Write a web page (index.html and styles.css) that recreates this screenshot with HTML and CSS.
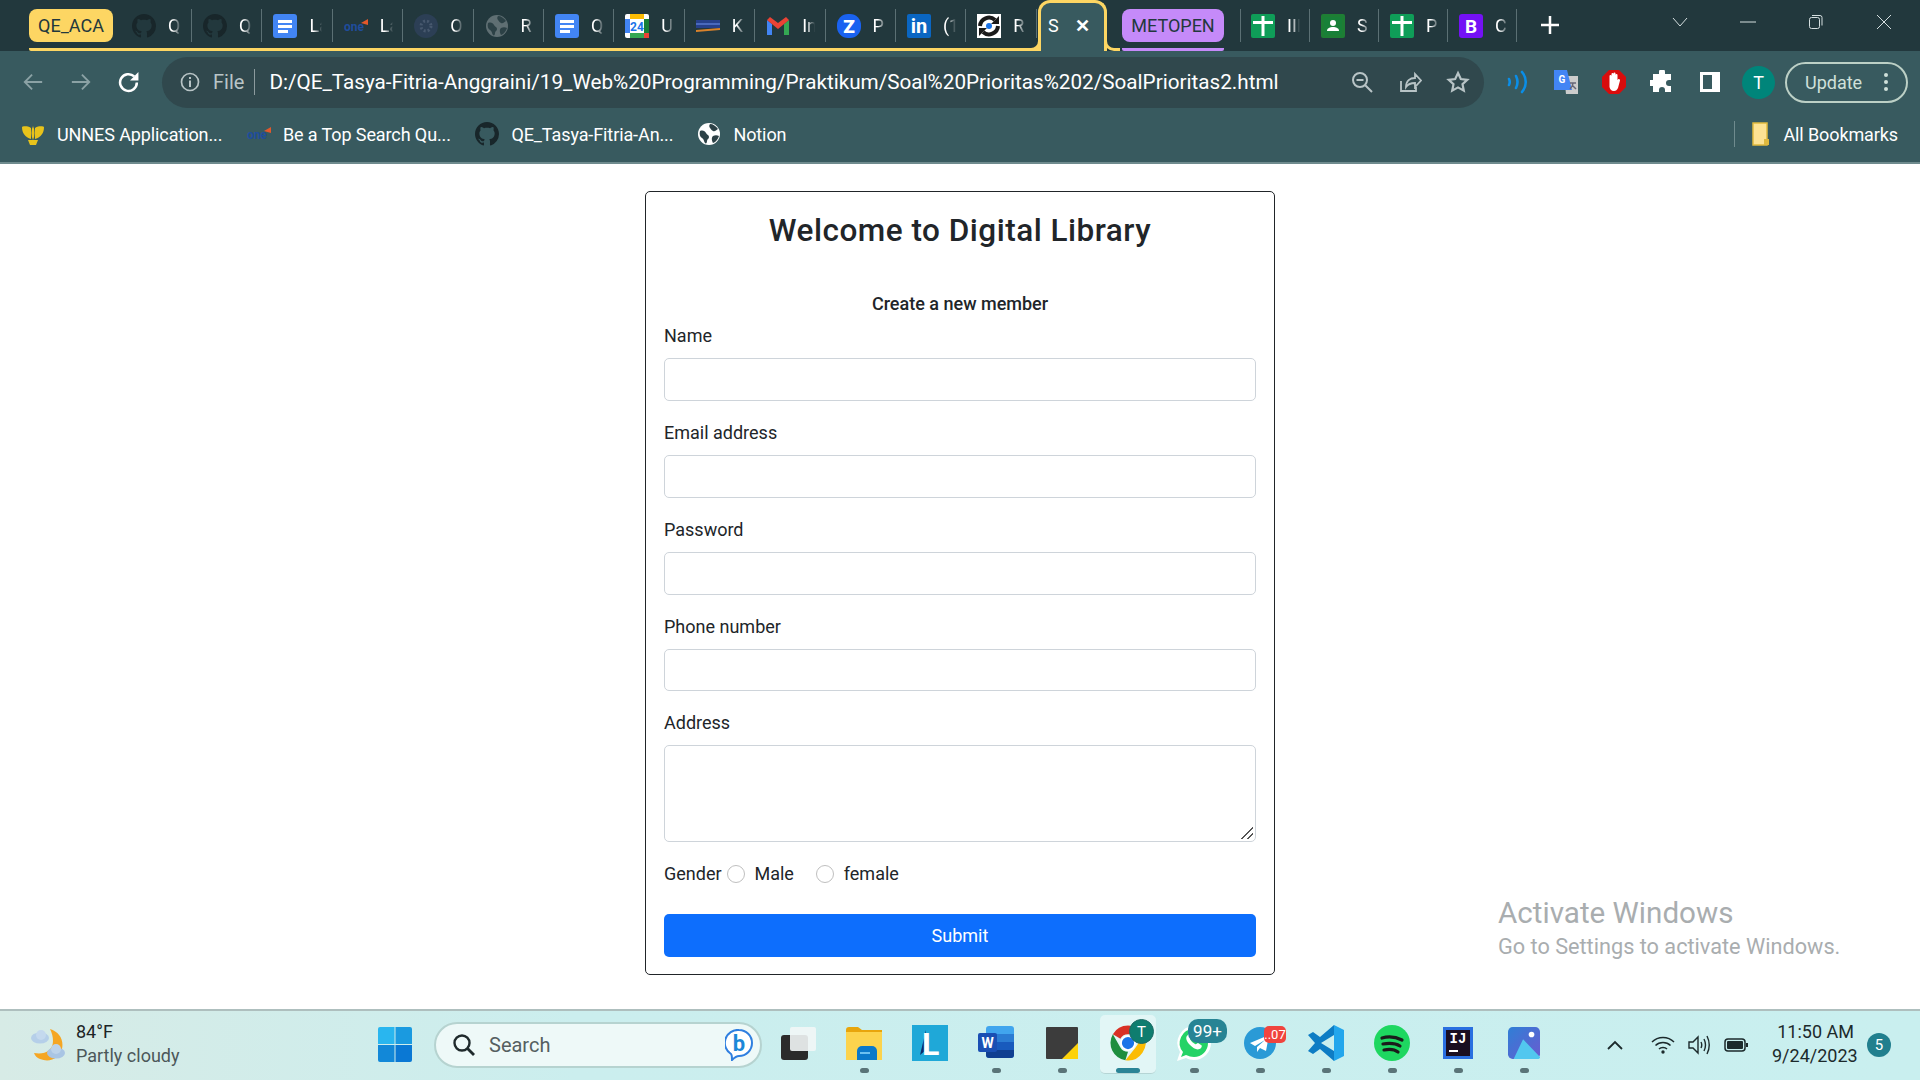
FILE: index.html
```html
<!DOCTYPE html>
<html lang="en">
<head>
<meta charset="utf-8">
<title>Digital Library</title>
<link rel="stylesheet" href="styles.css">
</head>
<body>
<svg class="defs" aria-hidden="true">
  <symbol id="gh" viewBox="0 0 16 16"><path fill="currentColor" d="M8 0C3.58 0 0 3.58 0 8c0 3.54 2.29 6.53 5.47 7.59.4.07.55-.17.55-.38 0-.19-.01-.82-.01-1.49-2.01.37-2.53-.49-2.69-.94-.09-.23-.48-.94-.82-1.13-.28-.15-.68-.52-.01-.53.63-.01 1.08.58 1.23.82.72 1.21 1.87.87 2.33.66.07-.52.28-.87.51-1.07-1.78-.2-3.64-.89-3.64-3.95 0-.87.31-1.59.82-2.15-.08-.2-.36-1.02.08-2.12 0 0 .67-.21 2.2.82.64-.18 1.32-.27 2-.27.68 0 1.36.09 2 .27 1.53-1.04 2.2-.82 2.2-.82.44 1.1.16 1.92.08 2.12.51.56.82 1.27.82 2.15 0 3.07-1.87 3.75-3.65 3.95.29.25.54.73.54 1.48 0 1.07-.01 1.93-.01 2.2 0 .21.15.46.55.38A8.013 8.013 0 0016 8c0-4.42-3.58-8-8-8z"/></symbol>
  <symbol id="docs" viewBox="0 0 24 24"><rect width="24" height="24" rx="3" fill="#4285f4"/><path fill="#fff" d="M5 6h14v3H5zM5 11h14v3H5zM5 16h10v3H5z"/></symbol>
  <symbol id="globe" viewBox="0 0 24 24"><circle cx="12" cy="12" r="11" fill="currentColor"/><path fill="#2c4146" d="M3 9c3-1 5 0 6 2s3 2 3 4-2 2-2 4-1 3-2 2-1-4-3-5-3-4-2-7zM13 2c3 0 6 2 8 5-2 1-3 3-5 2s-2-2-3-3-1-3 0-4zM16 14c2-1 4-1 6 0-1 3-3 6-6 7-1-2-2-5 0-7z"/></symbol>
  <symbol id="plus" viewBox="0 0 24 24"><rect width="24" height="24" rx="2" fill="#0f9d58"/><path fill="#fff" d="M10.500 2h3v5H22v3h-8.500v12h-3V10H2V7h8.500z"/></symbol>
  <symbol id="one" viewBox="0 0 24 14"><text x="0" y="12" font-family="Roboto" font-size="12" font-weight="700" fill="#1f4d9c">one</text><path fill="#e2582b" d="M17 4l7-4v6z"/></symbol>
</svg>

<header class="chrome">
  <div class="tabstrip">
    <div class="tab-group">
      <span class="group-pill pill-yellow">QE_ACA</span>
      <div class="tab tab-first"><svg class="ti ti-gh"><use href="#gh"/></svg><span class="tt">Q</span></div>
      <div class="tab"><svg class="ti ti-gh"><use href="#gh"/></svg><span class="tt">Q</span></div>
      <div class="tab"><svg class="ti"><use href="#docs"/></svg><span class="tt">La</span></div>
      <div class="tab"><svg class="ti"><use href="#one"/></svg><span class="tt">La</span></div>
      <div class="tab"><svg class="ti" viewBox="0 0 24 24"><circle cx="12" cy="12" r="12" fill="#2c3f55"/><circle cx="12" cy="12" r="5" fill="none" stroke="#47586e" stroke-width="3" stroke-dasharray="2 2"/></svg><span class="tt">O</span></div>
      <div class="tab"><svg class="ti ti-globe"><use href="#globe"/></svg><span class="tt">R</span></div>
      <div class="tab"><svg class="ti"><use href="#docs"/></svg><span class="tt">Q</span></div>
      <div class="tab"><svg class="ti" viewBox="0 0 24 24"><rect width="24" height="24" rx="2" fill="#fff"/><path fill="#4285f4" d="M0 5h5v14H0z"/><path fill="#fbbc04" d="M5 0h14v5H5z"/><path fill="#34a853" d="M5 19h14v5H5z"/><path fill="#ea4335" d="M19 19h5v5h-5z"/><path fill="#188038" d="M19 5h5v14h-5z"/><text x="12" y="17" text-anchor="middle" font-family="Roboto" font-size="12" font-weight="700" fill="#1a73e8">24</text></svg><span class="tt">U</span></div>
      <div class="tab"><svg class="ti" viewBox="0 0 24 24"><path fill="#26408b" d="M0 6h24v8H0z"/><path fill="#4a69bd" d="M0 9h24v2H0z"/><path fill="#d9822b" d="M0 16l24-2v2L0 18z"/></svg><span class="tt">K</span></div>
      <div class="tab"><svg class="ti" viewBox="0 0 24 24"><path fill="#4285f4" d="M1 6v15h5V10z"/><path fill="#34a853" d="M23 6v15h-5V10z"/><path fill="#ea4335" d="M1 6l3-3 8 6 8-6 3 3-11 9z"/></svg><span class="tt">In</span></div>
      <div class="tab"><svg class="ti" viewBox="0 0 24 24"><rect width="24" height="24" rx="11" fill="#1a62f0"/><text x="12" y="19" text-anchor="middle" font-family="Roboto" font-size="19" font-weight="900" fill="#fff">Z</text></svg><span class="tt">P</span></div>
      <div class="tab"><svg class="ti" viewBox="0 0 24 24"><rect width="24" height="24" rx="2" fill="#0a66c2"/><text x="12" y="19" text-anchor="middle" font-family="Roboto" font-size="20" font-weight="700" fill="#fff">in</text></svg><span class="tt">(1</span></div>
      <div class="tab"><svg class="ti" viewBox="0 0 24 24"><rect width="24" height="24" fill="#fff"/><path fill="none" stroke="#1a1a1a" stroke-width="4" d="M3 12a9 9 0 0 1 15-6M21 12a9 9 0 0 1-15 6"/><path fill="#1a1a1a" d="M22 2v8h-8zM2 22v-8h8z"/><circle cx="12" cy="12" r="3" fill="#1a73e8"/></svg><span class="tt">R</span></div>
    </div>
    <div class="tab-active"><span class="at">S</span><span class="tab-x">✕</span></div>
    <div class="tab-group-b">
      <span class="group-pill pill-purple">METOPEN</span>
    </div>
    <div class="tab tab-wide"><svg class="ti"><use href="#plus"/></svg><span class="tt">III</span></div>
    <div class="tab"><svg class="ti" viewBox="0 0 24 24"><rect width="24" height="24" rx="2" fill="#1e7e34"/><rect x="3" y="3" width="18" height="18" fill="#188038"/><circle cx="12" cy="9" r="3" fill="#fff"/><path fill="#fff" d="M6 17c0-3 3-4 6-4s6 1 6 4z"/></svg><span class="tt">S</span></div>
    <div class="tab"><svg class="ti"><use href="#plus"/></svg><span class="tt">P</span></div>
    <div class="tab"><svg class="ti" viewBox="0 0 24 24"><rect width="24" height="24" rx="3" fill="#7411f5"/><text x="12" y="19" text-anchor="middle" font-family="Roboto" font-size="19" font-weight="700" fill="#fff">B</text></svg><span class="tt">C</span></div>
    <svg class="newtab" viewBox="0 0 18 18"><path fill="none" stroke="#fff" stroke-width="2.500" d="M9 0v18M0 9h18"/></svg>
    <div class="winctl">
      <svg viewBox="0 0 16 16"><path fill="none" stroke="#d5dfe0" d="M1 4l7 8 7-8"/></svg>
      <svg viewBox="0 0 16 16"><path stroke="#d5dfe0" d="M0 8h16"/></svg>
      <svg viewBox="0 0 16 16"><rect x="1.500" y="3.500" width="10" height="11" rx="2" fill="none" stroke="#d5dfe0"/><path fill="none" stroke="#d5dfe0" d="M4 1.500h8a2 2 0 0 1 2 2v8"/></svg>
      <svg viewBox="0 0 16 16"><path stroke="#d5dfe0" d="M1 1l14 14M15 1L1 15"/></svg>
    </div>
  </div>

  <div class="toolbar">
    <div class="nav">
      <svg class="nv nv-off" viewBox="0 0 24 24"><path fill="none" stroke="currentColor" stroke-width="2" d="M22 12H3M11 4l-8 8 8 8"/></svg>
      <svg class="nv nv-off" viewBox="0 0 24 24"><path fill="none" stroke="currentColor" stroke-width="2" d="M2 12h19M13 4l8 8-8 8"/></svg>
      <svg class="nv" viewBox="2 1 21 21"><path fill="none" stroke="currentColor" stroke-width="2.400" d="M20 12a8 8 0 1 1-2.500-5.800"/><path fill="currentColor" d="M21.500 2v8h-8z"/></svg>
    </div>
    <div class="omnibox">
      <svg class="oi-info" viewBox="0 0 20 20"><circle cx="10" cy="10" r="8.500" fill="none" stroke="currentColor" stroke-width="1.700"/><path fill="currentColor" d="M9 8.500h2V15H9zM9 5h2v2H9z"/></svg>
      <span class="file">File</span>
      <span class="url">D:/QE_Tasya-Fitria-Anggraini/19_Web%20Programming/Praktikum/Soal%20Prioritas%202/SoalPrioritas2.html</span>
      <div class="omni-actions">
        <svg viewBox="0 0 24 24"><circle cx="10" cy="10" r="7" fill="none" stroke="currentColor" stroke-width="2"/><path stroke="currentColor" stroke-width="2" d="M6.500 10h7M15 15l7 7"/></svg>
        <svg viewBox="0 0 24 24"><path fill="none" stroke="currentColor" stroke-width="1.800" d="M3 11v10h15v-4M8 17c0-6 4-9 9-9V4l6 6.500-6 6.500v-4c-4 0-7 1-9 4z"/></svg>
        <svg viewBox="0 0 24 24"><path fill="none" stroke="currentColor" stroke-width="2.200" d="M12 3l2.800 6 6.500.8-4.800 4.400 1.300 6.500L12 17.400l-5.800 3.300 1.300-6.500-4.800-4.400 6.500-.8z"/></svg>
      </div>
    </div>
    <div class="exts">
      <svg viewBox="0 0 24 24"><path fill="none" stroke="#0a8ee8" stroke-width="2.600" stroke-linecap="round" d="M3 9c1 2 1 4 0 6M10 6c2 4 2 8 0 12M16 2c5 6 5 14 0 20"/></svg>
      <svg viewBox="0 0 24 24"><path fill="#ccc" d="M10 6h14v18H12z"/><path fill="#4285f4" d="M0 0h13l5 20H0z"/><text x="8" y="13" text-anchor="middle" font-family="Roboto" font-size="10" font-weight="700" fill="#fff">G</text><path fill="none" stroke="#667" stroke-width="1.500" d="M16 13h6M19 13c0 3-2 5-3 6M18 15l4 4"/></svg>
      <svg viewBox="0 0 24 24"><path fill="#d90c0c" d="M7 0h10l7 7v10l-7 7H7l-7-7V7z"/><path fill="#fff" d="M7.500 10V6a1 1 0 0 1 2 0V4a1 1 0 0 1 2 0V3.500a1 1 0 0 1 2 0V5a1 1 0 0 1 2 0v5l1-1c1 0 1.500.5 1.500 1.500L16 18c-1 2-2 3-4 3-3 0-4-2-4.500-4z"/></svg>
      <svg viewBox="0 0 24 24"><path fill="#fff" d="M9 2a3 3 0 0 1 6 0v2h6v6h-2a3 3 0 0 0 0 6h2v6h-6v-2a3 3 0 0 0-6 0v2H3v-6H1a3 3 0 0 1 0-6h2V4h6z"/></svg>
      <svg viewBox="0 0 24 24"><path fill="#fff" fill-rule="evenodd" d="M2 2h20v20H2zM5 5v14h9V5z"/></svg>
      <span class="avatar">T</span>
    </div>
    <div class="update"><span>Update</span><span class="kebab"><i></i><i></i><i></i></span></div>
  </div>

  <div class="bookmarks">
    <div class="bm bm-1"><svg class="bi" viewBox="0 0 24 24"><path fill="#e8c31b" d="M12 4c2 4 2 10 0 14 -2-4-2-10 0-14zM10 6C5 3 1 5 1 5c0 6 3 10 9 12zM14 6c5-3 9-1 9-1 0 6-3 10-9 12zM7 18h10l-2 5H9z"/></svg><span>UNNES Application...</span></div>
    <div class="bm bm-2"><svg class="bi"><use href="#one"/></svg><span>Be a Top Search Qu...</span></div>
    <div class="bm bm-3"><svg class="bi bi-gh"><use href="#gh"/></svg><span>QE_Tasya-Fitria-An...</span></div>
    <div class="bm bm-4"><svg class="bi bi-globe"><use href="#globe"/></svg><span>Notion</span></div>
    <div class="bm-right"><svg class="bi bi-folder" viewBox="0 0 24 24"><path fill="#fde293" stroke="#e0b93e" stroke-width="1.500" d="M4 1h14v22H4z"/><path fill="#e0b93e" d="M15 17h5v6h-5z"/></svg><span>All Bookmarks</span></div>
  </div>
</header>

<main class="page">
  <form class="card">
    <h3 class="title">Welcome to Digital Library</h3>
    <p class="subtitle">Create a new member</p>
    <label class="lbl" for="f-name">Name</label>
    <input class="ctl" id="f-name" type="text">
    <label class="lbl" for="f-email">Email address</label>
    <input class="ctl" id="f-email" type="email">
    <label class="lbl" for="f-pass">Password</label>
    <input class="ctl" id="f-pass" type="password">
    <label class="lbl" for="f-phone">Phone number</label>
    <input class="ctl" id="f-phone" type="tel">
    <label class="lbl" for="f-addr">Address</label>
    <textarea class="ctl ctl-area" id="f-addr"></textarea>
    <div class="gender">
      <span>Gender</span>
      <input class="radio" type="radio" name="g" id="g-m"><label class="r-lbl r-male" for="g-m">Male</label>
      <input class="radio" type="radio" name="g" id="g-f"><label class="r-lbl" for="g-f">female</label>
    </div>
    <button class="submit" type="button">Submit</button>
  </form>
  <div class="activate">
    <div class="a1">Activate Windows</div>
    <div class="a2">Go to Settings to activate Windows.</div>
  </div>
</main>

<footer class="taskbar">
  <div class="weather">
    <svg class="w-icon" viewBox="0 0 36 34"><path fill="#f5a623" d="M20 1c9 3 14 10 12 20-2 9-12 14-22 10-3-1-5-3-6-6 10 2 19-2 19-12 0-4-1-8-3-12z"/><ellipse cx="10" cy="10" rx="9" ry="5.500" fill="#b5cfe9"/><circle cx="11" cy="7" r="5" fill="#c4d9ee"/><ellipse cx="26" cy="25" rx="9" ry="5.500" fill="#a9c5e4"/><circle cx="26" cy="21" r="5" fill="#bcd3ea"/></svg>
    <div class="w-text"><div class="w-t">84°F</div><div class="w-s">Partly cloudy</div></div>
  </div>
  <svg class="start" viewBox="0 0 34 35"><path fill="#29b6ef" d="M0 2a2 2 0 0 1 2-2h14.500v17H0z"/><path fill="#1a9ae0" d="M17.500 0H32a2 2 0 0 1 2 2v15H17.500z"/><path fill="#1288d8" d="M0 18h16.500v17H2a2 2 0 0 1-2-2z"/><path fill="#0a78d4" d="M17.500 18H34v15a2 2 0 0 1-2 2H17.500z"/></svg>
  <div class="search">
    <svg class="s-mag" viewBox="0 0 24 24"><circle cx="10" cy="10" r="7.500" fill="none" stroke="#1f2a2c" stroke-width="2.400"/><path stroke="#1f2a2c" stroke-width="2.800" d="M15.500 15.500L22 22"/></svg>
    <span class="s-txt">Search</span>
    <svg class="s-bing" viewBox="0 0 28 32"><path fill="#fff" stroke="#2f7fe0" stroke-width="2" d="M14 1a13 13 0 0 1 0 26c-2 0-4 1-7 4 0-3 0-5-1-6A13 13 0 0 1 14 1z"/><text x="14" y="22" text-anchor="middle" font-family="Roboto" font-size="22" font-weight="700" fill="#1b88d8">b</text></svg>
  </div>
  <div class="apps">
    <div class="app"><svg class="ai" viewBox="0 0 36 34"><rect x="1" y="9" width="27" height="25" rx="3" fill="#2b2b2b"/><rect x="10" y="1" width="26" height="24" rx="2" fill="#f2f6f6" fill-opacity=".9"/></svg></div>
    <div class="app app-on"><svg class="ai" viewBox="0 0 36 34"><path fill="#e8a50c" d="M0 4a3 3 0 0 1 3-3h9l4 3h20v6H0z"/><path fill="#fcd34d" d="M0 6h36v28H0z"/><path fill="#0b78c9" d="M11 34v-9a5 5 0 0 1 5-5h10a5 5 0 0 1 5 5v9z"/><path fill="#6cc0f0" d="M14 26h10v2H14z"/></svg></div>
    <div class="app"><svg class="ai" viewBox="0 0 36 36"><rect width="36" height="36" fill="#1fa8d8"/><path fill="#0c2c6a" d="M8 30l6-25v20z"/><text x="10" y="30" font-family="Roboto" font-size="32" font-weight="700" fill="#fff">L</text></svg></div>
    <div class="app app-on"><svg class="ai" viewBox="0 0 36 34"><rect x="8" y="0" width="28" height="32" rx="3" fill="#41a5ee"/><rect x="8" y="8" width="28" height="8" fill="#2b7cd3"/><rect x="8" y="16" width="28" height="8" fill="#185abd"/><path fill="#103f91" d="M8 24h28v5a3 3 0 0 1-3 3H11a3 3 0 0 1-3-3z"/><rect y="7" width="19" height="19" rx="2" fill="#1a4fb3"/><text x="9.500" y="22" text-anchor="middle" font-family="Roboto" font-size="14" font-weight="700" fill="#fff">W</text></svg></div>
    <div class="app app-on"><svg class="ai ai-s" viewBox="0 0 32 32"><rect width="32" height="32" rx="1" fill="#3c3c3c"/><path fill="#fdd20a" d="M16 32l16-16v16z"/></svg></div>
    <div class="app app-active">
      <svg class="ai ai-chrome" viewBox="0 0 48 48"><path fill="#d93025" d="M24 4a20 20 0 0 1 17.300 10H24a10 10 0 0 0-8.700 5L6.700 14A20 20 0 0 1 24 4z"/><path fill="#1e8e3e" d="M6.700 14l8.600 15a10 10 0 0 0 8.700 5l-3 9.800A20 20 0 0 1 6.700 14z"/><path fill="#fbbc04" d="M41.300 14A20 20 0 0 1 21 43.800L32.700 29a10 10 0 0 0 0-15z"/><circle cx="24" cy="24" r="8" fill="#1a73e8" stroke="#fff" stroke-width="2"/></svg>
      <span class="b-t">T</span>
    </div>
    <div class="app app-on"><svg class="ai" viewBox="0 0 36 36"><path fill="#fff" d="M18 1a17 17 0 0 1 0 34c-3 0-6-1-8-2l-9 3 3-9A17 17 0 0 1 18 1z"/><path fill="#25d366" d="M18 4a14 14 0 0 1 0 28c-3 0-5-1-8-2l-5 2 2-5A14 14 0 0 1 18 4z"/><path fill="#fff" d="M12 10c-3 2-2 6 2 10s8 6 11 3c1-1 1-3 0-3l-3-2c-1 0-2 2-3 1-2-1-4-3-5-5 0-1 1-2 1-3l-1-3c0-1-1-1-2 2z"/></svg><span class="b-99">99+</span></div>
    <div class="app app-on"><svg class="ai ai-s" viewBox="0 0 32 32"><ellipse cx="16" cy="16" rx="16" ry="16" fill="#2a9ad6"/><path fill="#fff" d="M6 16l19-8-3 16-6-3-3 4v-5l8-7-10 6z"/></svg><span class="b-tg">..07</span></div>
    <div class="app app-on"><svg class="ai" viewBox="0 0 36 36"><path fill="#23a6ec" d="M26 0l10 5v26l-10 5z"/><path fill="#0d7cc4" d="M26 0v10l-13 8 13 8v10L12 24l-7 5-5-3 7-8-7-8 5-3 7 5z"/></svg></div>
    <div class="app app-on"><svg class="ai" viewBox="0 0 36 36"><circle cx="18" cy="18" r="18" fill="#1ed760"/><path fill="none" stroke="#1b1b1b" stroke-width="3.200" stroke-linecap="round" d="M8 13c7-2 14-1 20 2M9 19c6-1 12-1 17 2M10 25c5-1 10-1 14 2"/></svg></div>
    <div class="app app-on"><svg class="ai ai-s" viewBox="3 2 30 32"><rect x="3" y="2" width="30" height="32" fill="#2a6fe0"/><rect x="6" y="5" width="24" height="26" fill="#1a0e20"/><text x="18" y="18" text-anchor="middle" font-family="Liberation Mono" font-size="14" font-weight="700" fill="#fff">IJ</text><path fill="#fff" d="M9 25h9v2H9z"/></svg></div>
    <div class="app app-on"><svg class="ai ai-s" viewBox="0 0 34 34"><defs><linearGradient id="ph" x1="0" y1="0" x2="1" y2="1"><stop offset="0" stop-color="#2f7fd6"/><stop offset="1" stop-color="#6a5bd0"/></linearGradient></defs><rect width="34" height="34" rx="5" fill="url(#ph)"/><circle cx="25" cy="8" r="3" fill="#fff"/><path fill="#52c7ef" d="M6 34L16 13l18 19v1a3 3 0 0 1-3 1z"/></svg></div>
  </div>
  <div class="tray">
    <svg class="tr-chev" viewBox="0 0 16 10"><path fill="none" stroke="#1c2a2c" stroke-width="1.800" d="M1 9l7-7 7 7"/></svg>
    <svg class="tr-wifi" viewBox="0 0 24 18"><path fill="none" stroke="#1c2a2c" stroke-width="1.500" d="M1 6c6-6 16-6 22 0M4.500 9.500c4-4 11-4 15 0M8 13c2-2 6-2 8 0"/><circle cx="12" cy="16" r="1.700" fill="#1c2a2c"/></svg>
    <svg class="tr-vol" viewBox="0 0 24 20"><path fill="none" stroke="#1c2a2c" stroke-width="1.400" d="M1 7h4l5-5v16l-5-5H1zM13 7c1 2 1 4 0 6M16 4c2 4 2 8 0 12M19 1c3 6 3 12 0 18"/></svg>
    <svg class="tr-bat" viewBox="0 0 24 14"><rect x="1" y="1" width="20" height="12" rx="3" fill="none" stroke="#1c2a2c" stroke-width="1.500"/><rect x="3" y="3" width="16" height="8" rx="1" fill="#1c2a2c"/><path fill="#1c2a2c" d="M22 5h2v4h-2z"/></svg>
    <div class="clock"><div>11:50 AM</div><div>9/24/2023</div></div>
    <span class="notif">5</span>
  </div>
</footer>
</body>
</html>
```
FILE: styles.css
```css
* { box-sizing: border-box; }
html, body { margin: 0; padding: 0; }
body {
  width: 1920px; height: 1080px; overflow: hidden;
  display: flex; flex-direction: column;
  background: #fff; color: #212529;
  font-family: Roboto, "Noto Sans", sans-serif;
}
.defs { position: absolute; width: 0; height: 0; }

/* browser chrome */
.chrome { flex: none; height: 164px; display: flex; flex-direction: column; background: #385a5f; color: #fff; border-bottom: 2px solid #6f8b8e; }
.tabstrip { height: 51px; flex: none; display: flex; background: #22383d; padding-left: 29px; }
.tab-group { display: flex; height: 51px; width: 1009px; flex: none; border-bottom: 3px solid #fdd663; padding-top: 9px; border-bottom-left-radius: 2px; }
.tab-group-b { flex: none; width: 102px; height: 51px; margin-left: 15px; border-bottom: 3px solid #c58af9; padding-top: 9px; border-radius: 0 0 2px 2px; }
.group-pill { display: flex; align-items: center; justify-content: center; height: 33px; border-radius: 8px; color: #22383d; font-size: 18px; flex: none; }
.pill-yellow { width: 84px; background: #fdd663; }
.pill-purple { width: 102px; background: #c58af9; }
.tab { flex: none; width: 70.400px; height: 33px; display: flex; align-items: center; padding-left: 11px; border-right: 1px solid #5b7074; position: relative; }
.tab-first { width: 79px; padding-left: 19px; }
.tabstrip > .tab { margin-top: 9px; width: 69px; }
.tabstrip > .tab-wide { margin-left: 16px; width: 70px; padding-left: 10px; border-left: 1px solid #5b7074; }
.ti { width: 24px; height: 24px; flex: none; }
.ti-gh { color: #18262a; }
.ti-globe { color: #5f6f73; }
.tt { width: 13px; margin-left: 12px; overflow: hidden; white-space: nowrap; font-size: 18px; line-height: 33px; -webkit-mask-image: linear-gradient(90deg, #000 35%, transparent); mask-image: linear-gradient(90deg, #000 35%, transparent); }
.tab-active { flex: none; width: 69px; height: 51px; position: relative; background: #385a5f; border: 3px solid #fdd663; border-bottom: 0; border-radius: 12px 12px 0 0; display: flex; align-items: center; padding: 0 0 3px 7px; font-size: 18px; }
.tab-active::before, .tab-active::after { content: ""; position: absolute; bottom: 0; width: 13px; height: 10px; border-bottom: 3px solid #fdd663; background: #22383d; }
.tab-active::before { left: -16px; border-right: 3px solid #fdd663; border-bottom-right-radius: 10px; }
.tab-active::after { right: -16px; border-left: 3px solid #fdd663; border-bottom-left-radius: 10px; }
.at { width: 22px; }
.tab-x { font-size: 18px; font-weight: 700; margin-left: 5px; }
.newtab { width: 18px; height: 18px; margin: 16px 0 0 24px; flex: none; }
.winctl { display: flex; margin-left: 113px; gap: 52px; height: 16px; margin-top: 14px; }
.winctl svg { width: 16px; height: 16px; flex: none; }

.toolbar { height: 59px; flex: none; display: flex; align-items: center; padding: 3px 12px 0 22px; }
.nav { display: flex; gap: 26px; width: 140px; flex: none; }
.nv { width: 22px; height: 24px; flex: none; color: #fff; }
.nv-off { color: #8ba2a5; }
.omnibox { flex: none; width: 1322px; height: 51px; border-radius: 26px; background: #30484d; display: flex; align-items: center; padding-left: 18px; color: #b8c4c6; }
.oi-info { width: 20px; height: 20px; flex: none; margin-right: 13px; }
.file { font-size: 20px; padding-right: 10px; border-right: 1px solid #8c9b9e; line-height: 26px; margin-right: 14px; color: #b9c5c7; }
.url { font-size: 20.700px; color: #fff; white-space: nowrap; width: 1060px; }
.omni-actions { display: flex; gap: 24px; position: absolute; left: 1350px; top: 70px; }
.omni-actions svg { width: 24px; height: 24px; flex: none; }
.exts { flex: none; display: flex; align-items: center; gap: 24px; margin-left: 22px; }
.exts svg { width: 24px; height: 24px; flex: none; }
.avatar { flex: none; width: 33px; height: 33px; border-radius: 50%; background: #00857a; display: flex; align-items: center; justify-content: center; font-size: 18px; margin-left: -4px; }
.update { flex: none; margin-left: 10px; width: 123px; height: 41px; border: 2px solid #bcd0c6; border-radius: 21px; display: flex; align-items: center; padding-left: 18px; color: #cfe0da; font-size: 18px; }
.kebab { display: flex; flex-direction: column; gap: 3px; margin-left: 22px; }
.kebab i { width: 4px; height: 4px; border-radius: 50%; background: #cfe0da; display: block; }

.bookmarks { flex: 1; display: flex; align-items: center; font-size: 18px; letter-spacing: -.1px; color: #fff; padding-left: 21px; padding-bottom: 4px; }
.bm { display: flex; align-items: center; flex: none; }
.bm span { white-space: nowrap; }
.bi { width: 24px; height: 24px; flex: none; margin-right: 12px; }
.bi-gh { color: #18262a; }
.bi-globe { color: #fff; margin-right: 12px; }
.bi-folder { margin-right: 10px; }
.bm-2 { margin-left: 24.500px; }
.bm-3 { margin-left: 24.500px; }
.bm-4 { margin-left: 24px; }
.bm-right { margin-left: auto; display: flex; align-items: center; border-left: 1px solid #6f8b8e; height: 26px; padding-left: 14px; margin-right: 22px; }

/* page */
.page { flex: 1; position: relative; background: #fff; padding-top: 27px; }
.card { width: 630px; height: 784px; margin: 0 auto; border: 1px solid #212529; border-radius: 5px; padding: 18px; display: flex; flex-direction: column; }
.title { margin: 0; padding-top: 2px; font-size: 31.500px; line-height: 37.800px; font-weight: 500; letter-spacing: .5px; text-align: center; color: #212529; }
.subtitle { margin: 40px 0 5.700px; font-size: 18px; line-height: 27px; font-weight: 500; text-align: center; }
.lbl { font-size: 18px; line-height: 27px; margin-bottom: 9px; display: block; }
.ctl { display: block; width: 100%; height: 42.750px; flex: none; margin: 0 0 18px; padding: 6px 13px; border: 1px solid #ced4da; border-radius: 5px; background: #fff; font: inherit; outline: 0; resize: none; }
.ctl-area {
  height: 96.750px;
  background-image: linear-gradient(135deg, transparent 52%, #555 52%, #555 60%, transparent 60%, transparent 74%, #555 74%, #555 82%, transparent 82%);
  background-repeat: no-repeat;
  background-size: 13px 13px;
  background-position: right 2px bottom 2px;
}
.gender { display: flex; align-items: center; height: 27px; font-size: 18px; line-height: 27px; flex: none; }
.radio { appearance: none; -webkit-appearance: none; width: 18px; height: 18px; border: 1px solid #bfbfbf; border-radius: 50%; margin: 0 0 0 5px; background: #fff; flex: none; }
.r-lbl { margin-left: 10px; }
.r-male { margin-right: 17px; letter-spacing: -.05px; }
.submit { display: block; width: 100%; height: 42.750px; flex: none; margin-top: 26.800px; border: 0; border-radius: 5px; background: #0d6efd; color: #fff; font: inherit; font-size: 18px; }
.activate { position: absolute; left: 1498px; top: 730px; color: #a9adaf; }
.a1 { font-size: 29.600px; line-height: 38px; }
.a2 { font-size: 21.700px; line-height: 30px; }

/* taskbar */
.taskbar { flex: none; height: 71px; display: flex; align-items: center; padding-bottom: 2px; background: linear-gradient(90deg, #d7ebe6, #cbeeee 30%, #c9efef); border-top: 2px solid #aebfbe; }
.weather { flex: none; width: 378px; padding-left: 30px; display: flex; align-items: center; }
.w-icon { width: 36px; height: 34px; flex: none; }
.w-text { margin: -2px 0 0 10px; font-size: 18px; line-height: 24px; }
.w-t { color: #1c2426; }
.w-s { color: #4c5759; }
.start { width: 34px; height: 35px; flex: none; }
.search { flex: none; margin-left: 22px; width: 328px; height: 46px; border-radius: 23px; background: #eef9f8; border: 2px solid #b6d3d0; display: flex; align-items: center; padding-left: 16px; }
.s-mag { width: 24px; height: 24px; flex: none; }
.s-txt { margin-left: 13px; font-size: 20px; color: #555f61; }
.s-bing { width: 28px; height: 32px; flex: none; margin-left: auto; margin-right: 7px; }
.apps { flex: none; display: flex; margin-left: 3px; height: 69px; }
.app { flex: none; width: 66px; height: 69px; position: relative; display: flex; align-items: center; justify-content: center; padding-bottom: 3px; }
.ai { width: 36px; height: 36px; flex: none; }
.ai-s { width: 32px; height: 32px; }
.app-on::after { content: ""; position: absolute; left: 29px; bottom: 6px; width: 9px; height: 5px; border-radius: 3px; background: #5a7478; }
.app-active::before { content: ""; position: absolute; left: 5px; top: 5px; width: 56px; height: 58px; border-radius: 5px; background: rgba(255, 255, 255, .45); border-bottom: 1px solid #b5d5d5; }
.app-active::after { content: ""; position: absolute; left: 21px; bottom: 6px; width: 24px; height: 5px; border-radius: 3px; background: #2a8496; }
.ai-chrome { position: relative; width: 42px; height: 42px; }
.b-t { position: absolute; left: 34px; top: 9px; width: 25px; height: 25px; border-radius: 50%; background: #0f7d6f; border: 1px solid #1d6b66; color: #fff; font-size: 15px; display: flex; align-items: center; justify-content: center; }
.b-99 { position: absolute; left: 27px; top: 9px; width: 39px; height: 24px; border-radius: 10px; background: #278494; color: #fff; font-size: 17px; display: flex; align-items: center; justify-content: center; }
.b-tg { position: absolute; left: 37px; top: 16px; width: 22px; height: 17px; border-radius: 5px; background: #f0443e; color: #fff; font-size: 13px; display: flex; align-items: center; justify-content: center; }
.tray { flex: 1; display: flex; align-items: center; color: #1c2a2c; }
.tr-chev { width: 16px; height: 10px; flex: none; margin-left: 50px; }
.tr-wifi { width: 24px; height: 18px; flex: none; margin-left: 28px; }
.tr-vol { width: 24px; height: 20px; flex: none; margin-left: 13px; }
.tr-bat { width: 24px; height: 14px; flex: none; margin-left: 12px; }
.clock { flex: none; margin: -2px 0 0 24px; width: 82px; text-align: right; font-size: 18px; line-height: 24px; }
.notif { flex: none; margin-left: 13px; width: 24px; height: 24px; border-radius: 50%; background: #217f8e; color: #fff; font-size: 15px; display: flex; align-items: center; justify-content: center; }
```
